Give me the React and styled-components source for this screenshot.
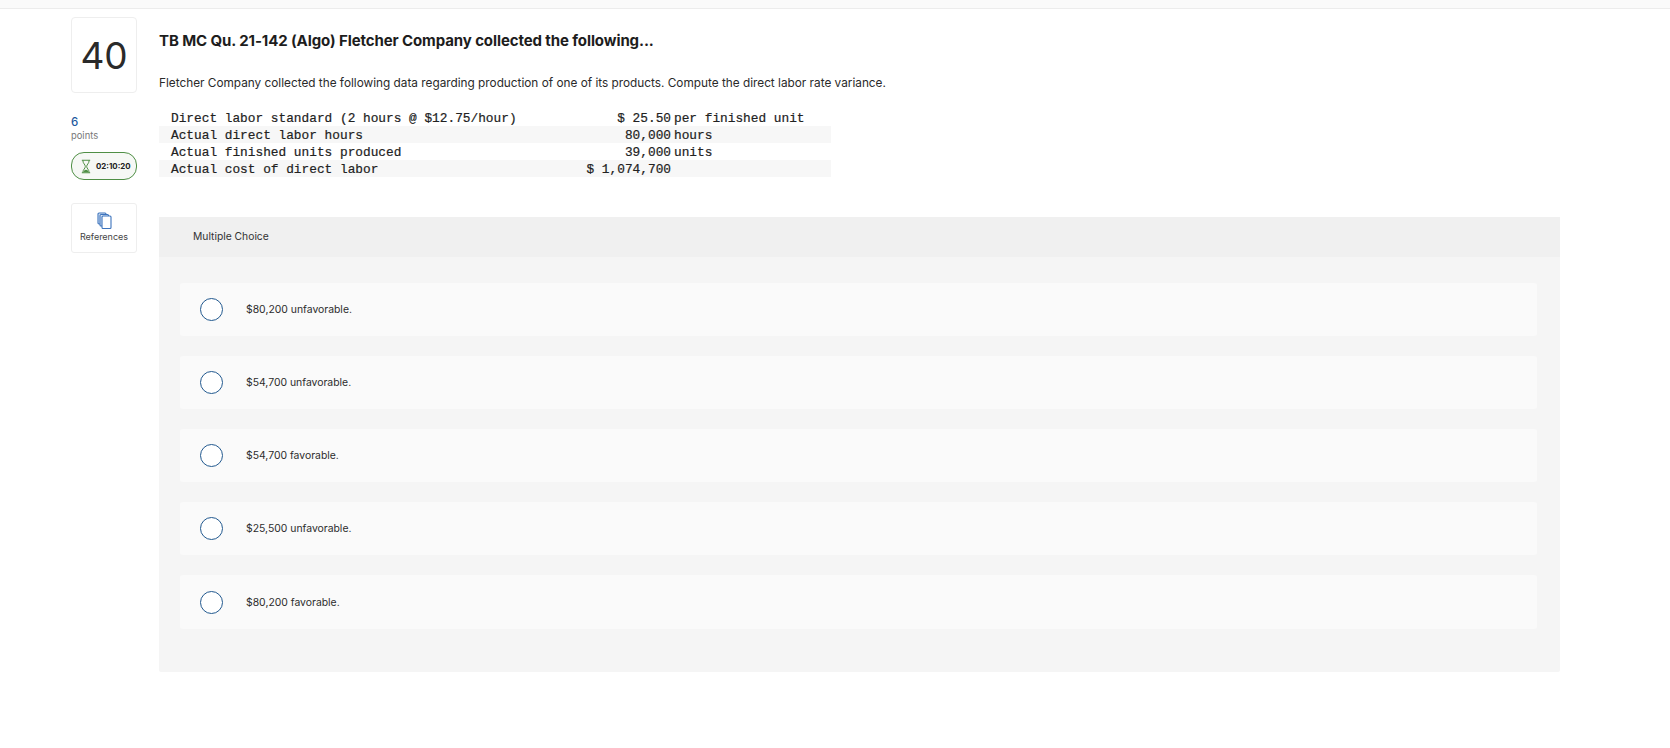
import React from "react";
import styled, { createGlobalStyle } from "styled-components";

const Global = createGlobalStyle`
  html, body { margin: 0; padding: 0; background: #fff; }
  body { font-family: Inter, "Open Sans", sans-serif; color: #1f1f1f; }
`;

const Page = styled.div`
  width: 1670px;
  height: 748px;
  overflow: hidden;
  background: #fff;
`;
const TopBar = styled.div`
  height: 8px;
  background: #fafafa;
  border-bottom: 1px solid #ececec;
`;
const Layout = styled.div`
  display: flex;
  gap: 22px;
  padding: 8px 0 0 71px;
`;
const Side = styled.aside`
  width: 66px;
  flex: none;
  display: flex;
  flex-direction: column;
`;
const NumberBox = styled.div`
  box-sizing: border-box;
  height: 76px;
  border: 1px solid #eeeeee;
  border-radius: 4px;
  display: flex;
  align-items: center;
  justify-content: center;
  font-size: 37px;
  font-weight: 400;
  color: #2a2a2a;
`;
const Points = styled.div`
  margin-top: 22px;
  font-size: 11.5px;
  line-height: 14px;
  color: #1f5a9e;
  font-weight: 500;
`;
const PointsLabel = styled.div`
  font-size: 9.4px;
  line-height: 13px;
  color: #777;
`;
const Timer = styled.div`
  box-sizing: border-box;
  margin-top: 10px;
  height: 28px;
  border: 1px solid #4f8f45;
  border-radius: 13px;
  background: #f6f8f5;
  display: flex;
  align-items: center;
  padding-left: 9px;
  gap: 5px;
  font-size: 7.9px;
  font-weight: 700;
  color: #222;
`;
const RefBox = styled.div`
  box-sizing: border-box;
  margin-top: 23px;
  height: 50px;
  border: 1px solid #eeeeee;
  border-radius: 3px;
  display: flex;
  flex-direction: column;
  align-items: center;
  padding-top: 8px;
  gap: 2px;
  font-size: 9px;
  line-height: 12px;
  color: #444;
`;
const Main = styled.main`
  width: 1401px;
  flex: none;
`;
const Title = styled.h1`
  margin: 0;
  padding-top: 14px;
  font-size: 15px;
  line-height: 20px;
  font-weight: 700;
  letter-spacing: -0.1px;
  color: #1d1d1d;
`;
const Prompt = styled.p`
  margin: 22px 0 0;
  font-size: 11.8px;
  line-height: 20px;
  color: #2a2a2a;
`;
const DataTable = styled.table`
  margin-top: 16px;
  width: 672px;
  table-layout: fixed;
  border-collapse: collapse;
  font-family: "Liberation Mono", monospace;
  font-size: 12.8px;
  color: #222;
  -webkit-text-stroke: 0.2px #222;
`;
const Row = styled.tr`
  height: 17px;
  background: ${(p) => (p.$shaded ? "#f7f7f7" : "transparent")};
`;
const Cell = styled.td`
  padding: 2px 0 0;
  line-height: 15px;
  white-space: pre;
`;
const Label = styled(Cell)`
  padding-left: 12px;
`;
const Value = styled(Cell)`
  text-align: right;
`;
const Unit = styled(Cell)`
  padding-left: 3px;
`;
const Panel = styled.section`
  margin-top: 40px;
  height: 455px;
  background: #f5f5f5;
  border-radius: 2px;
  box-sizing: border-box;
`;
const PanelHead = styled.div`
  box-sizing: border-box;
  height: 40px;
  background: #f0f0f0;
  display: flex;
  align-items: center;
  padding: 0 0 2px 34px;
  font-size: 10.3px;
  color: #333;
`;
const Options = styled.div`
  padding: 26px 23px 0 21px;
  display: flex;
  flex-direction: column;
  gap: 20px;
`;
const Option = styled.label`
  height: 53px;
  background: #fafafa;
  border-radius: 3px;
  display: flex;
  align-items: center;
  padding-left: 20px;
  gap: 23px;
  font-size: 10.4px;
  color: #2c2c2c;

  &:last-child {
    height: 54px;
  }
`;
const Radio = styled.span`
  box-sizing: border-box;
  width: 23px;
  height: 23px;
  border: 1.6px solid #22598f;
  border-radius: 50%;
  background: #fff;
  flex: none;
`;

const Hourglass = () => (
  <svg width="10" height="15" viewBox="0 0 12 17" fill="none">
    <path d="M1 1h10M1 16h10M2.200 1c0 4 3 5 3 7.500S2.200 12 2.200 16M9.800 1c0 4-3 5-3 7.500s3 3.500 3 7.500" stroke="#4f8f45" strokeWidth="1.200" />
    <path d="M2.800 15.500c.4-2 2-3 3.200-3s2.800 1 3.200 3z" fill="#4f8f45" />
  </svg>
);
const Pages = () => (
  <svg width="15" height="17" viewBox="0 0 15 17" fill="none" stroke="#3d74bd" strokeWidth="1.100">
    <rect x="1" y="1" width="8" height="11" rx="1" fill="#dce7f5" />
    <rect x="3" y="2.500" width="8.500" height="11.500" rx="1" fill="#dce7f5" />
    <rect x="5" y="4" width="9" height="12.500" rx="1" fill="#fff" />
  </svg>
);

const rows = [
  ["Direct labor standard (2 hours @ $12.75/hour)", "$ 25.50", "per finished unit"],
  ["Actual direct labor hours", "80,000", "hours"],
  ["Actual finished units produced", "39,000", "units"],
  ["Actual cost of direct labor", "$ 1,074,700", ""],
];
const choices = [
  "$80,200 unfavorable.",
  "$54,700 unfavorable.",
  "$54,700 favorable.",
  "$25,500 unfavorable.",
  "$80,200 favorable.",
];

export default function App() {
  return (
    <Page>
      <Global />
      <TopBar />
      <Layout>
        <Side>
          <NumberBox>40</NumberBox>
          <Points>6</Points>
          <PointsLabel>points</PointsLabel>
          <Timer>
            <Hourglass />
            02:10:20
          </Timer>
          <RefBox>
            <Pages />
            References
          </RefBox>
        </Side>
        <Main>
          <Title>TB MC Qu. 21-142 (Algo) Fletcher Company collected the following...</Title>
          <Prompt>Fletcher Company collected the following data regarding production of one of its products. Compute the direct labor rate variance.</Prompt>
          <DataTable>
            <colgroup>
              <col style={{ width: 400 }} />
              <col style={{ width: 112 }} />
              <col style={{ width: 160 }} />
            </colgroup>
            <tbody>
              {rows.map((r, i) => (
                <Row key={r[0]} $shaded={i % 2 === 1}>
                  <Label>{r[0]}</Label>
                  <Value>{r[1]}</Value>
                  <Unit>{r[2]}</Unit>
                </Row>
              ))}
            </tbody>
          </DataTable>
          <Panel>
            <PanelHead>Multiple Choice</PanelHead>
            <Options>
              {choices.map((c, i) => (
                <Option key={i}>
                  <Radio />
                  {c}
                </Option>
              ))}
            </Options>
          </Panel>
        </Main>
      </Layout>
    </Page>
  );
}
